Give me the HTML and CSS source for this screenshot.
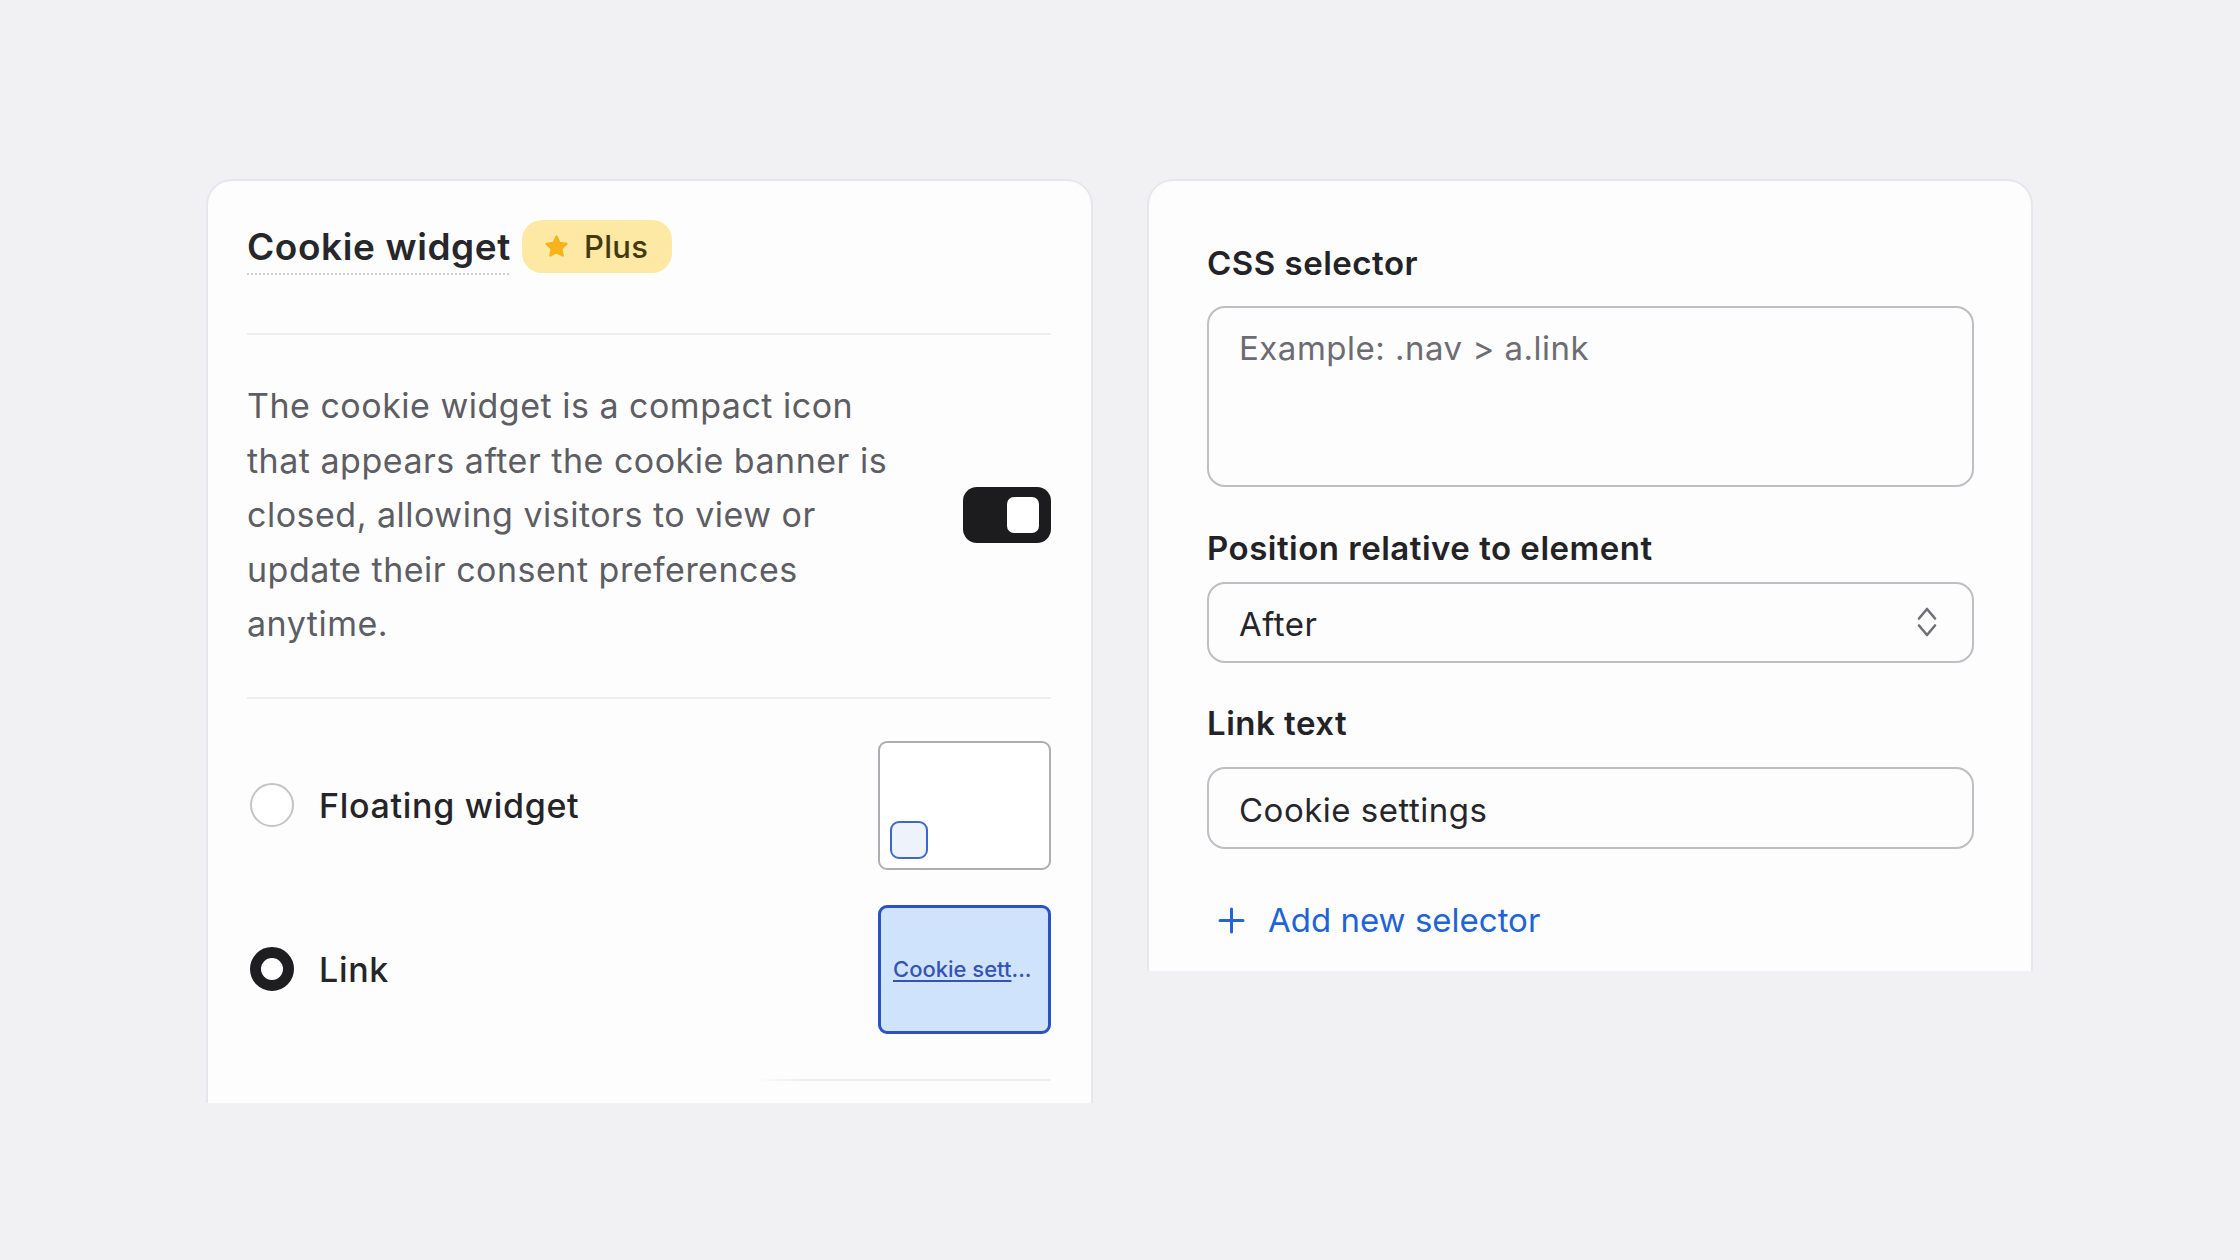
FILE: index.html
```html
<!DOCTYPE html>
<html lang="en">
<head>
<meta charset="utf-8">
<title>Cookie widget</title>
<link rel="stylesheet" href="styles.css">
</head>
<body>
<main class="stage">
  <section class="card card-widget">
    <header class="widget-head">
      <h2 class="widget-title"><span class="dotted">Cookie widget</span></h2>
      <span class="badge">
        <svg class="star" width="25" height="25" viewBox="0 0 24 24" aria-hidden="true"><polygon points="12 2.5 14.9 8.6 21.5 9.5 16.7 14.1 17.9 20.7 12 17.5 6.1 20.7 7.3 14.1 2.5 9.5 9.1 8.6" fill="#f7b31c" stroke="#f7b31c" stroke-width="2.2" stroke-linejoin="round"/></svg>
        <span>Plus</span>
      </span>
    </header>
    <div class="desc-row">
      <p class="desc">The cookie widget is a compact icon that appears after the cookie banner is closed, allowing visitors to view or update their consent preferences anytime.</p>
      <div class="toggle"><span class="knob"></span></div>
    </div>
    <div class="options">
      <div class="option">
        <span class="radio"></span>
        <span class="option-label">Floating widget</span>
        <div class="preview preview-float"><span class="mini"></span></div>
      </div>
      <div class="option">
        <span class="radio radio-on"></span>
        <span class="option-label">Link</span>
        <div class="preview preview-link"><span class="link-sample"><span class="u">Cookie sett</span>...</span></div>
      </div>
    </div>
    <div class="fade-rule"></div>
  </section>

  <section class="card card-form">
    <label class="field-label lbl-css">CSS selector</label>
    <div class="textarea"><span class="placeholder">Example: .nav &gt; a.link</span></div>
    <label class="field-label lbl-pos">Position relative to element</label>
    <div class="select">
      <span class="select-value">After</span>
      <svg class="chev" width="22" height="32" viewBox="0 0 22 32" aria-hidden="true"><path d="M3 12.5 L11 3 L19 12.5 M3 19.5 L11 29 L19 19.5" fill="none" stroke="#6f6f75" stroke-width="2.6" stroke-linecap="round" stroke-linejoin="round"/></svg>
    </div>
    <label class="field-label lbl-link">Link text</label>
    <div class="input"><span class="input-value">Cookie settings</span></div>
    <div class="add-row">
      <svg class="plus" width="27" height="27" viewBox="0 0 27 27" aria-hidden="true"><path d="M13.5 2 V25 M2 13.5 H25" stroke="#2466d8" stroke-width="3" stroke-linecap="round"/></svg>
      <span class="add-text">Add new selector</span>
    </div>
  </section>
</main>
</body>
</html>
```

FILE: styles.css
```css
* { box-sizing: border-box; }
html, body { margin: 0; padding: 0; }
body {
  background: #f1f0f3;
  font-family: Inter, "Noto Sans", "Liberation Sans", sans-serif;
  color: #1f1f23;
  width: 2240px;
  height: 1260px;
  overflow: hidden;
}
.stage {
  display: flex;
  align-items: flex-start;
  gap: 54px;
  padding: 179px 0 0 206px;
}
.card {
  background: #fdfdfe;
  border: 2px solid #e7e6eb;
  border-bottom: none;
  border-radius: 26px 26px 0 0;
}
.card-widget {
  width: 887px;
  height: 924px;
  padding: 39px 40px 0 39px;
  overflow: hidden;
}
.widget-head {
  display: flex;
  align-items: center;
  gap: 11px;
  height: 53px;
  margin-bottom: 60px;
}
.widget-title {
  margin: 0;
  font-size: 37px;
  font-weight: 600;
  letter-spacing: 0.6px;
  color: #27272b;
  line-height: 44px;
}
.dotted {
  text-decoration: underline dotted #cfcfd4;
  text-decoration-thickness: 2px;
  text-underline-offset: 14px;
  text-decoration-skip-ink: none;
}
.badge {
  display: inline-flex;
  align-items: center;
  gap: 15px;
  height: 53px;
  padding: 0 24px 0 22px;
  border-radius: 20px;
  background: #fde9a3;
  color: #45380f;
  font-size: 31px;
  font-weight: 500;
  letter-spacing: 0.3px;
}
.star { display: block; }
.desc-row {
  display: flex;
  align-items: center;
  justify-content: space-between;
  border-top: 2px solid #eeeef1;
  padding: 44px 0 45px;
}
.desc {
  margin: 0;
  width: 655px;
  font-size: 34px;
  letter-spacing: 0.5px;
  line-height: 54.6px;
  color: #5d5d64;
}
.toggle {
  width: 88px;
  height: 56px;
  border-radius: 14px;
  background: #1c1c1f;
  display: flex;
  justify-content: flex-end;
  align-items: center;
  padding: 0 12px;
}
.knob {
  width: 32px;
  height: 36px;
  border-radius: 7px;
  background: #ffffff;
}
.options {
  border-top: 2px solid #eeeef1;
  padding: 42px 0 45px;
  display: flex;
  flex-direction: column;
  gap: 35px;
}
.option {
  display: flex;
  align-items: center;
}
.radio {
  width: 44px;
  height: 44px;
  border-radius: 50%;
  border: 2px solid #c4c4c8;
  background: #fff;
  margin-left: 3px;
  flex: none;
}
.radio-on {
  border: 11px solid #1e1e21;
}
.option-label {
  margin-left: 25px;
  font-size: 34px;
  font-weight: 500;
  letter-spacing: 0.7px;
  color: #252529;
}
.preview {
  margin-left: auto;
  width: 173px;
  height: 129px;
  border-radius: 9px;
  flex: none;
}
.preview-float {
  border: 2px solid #adadb2;
  background: #fff;
  display: flex;
  align-items: flex-end;
  padding: 0 0 9px 10px;
}
.mini {
  width: 38px;
  height: 38px;
  border-radius: 9px;
  border: 2px solid #3d68c9;
  background: #eef2fb;
}
.preview-link {
  border: 3px solid #2a52c6;
  background: #cfe3fc;
  display: flex;
  align-items: center;
  padding-left: 12px;
}
.link-sample {
  font-size: 22px;
  font-weight: 500;
  color: #3653b4;
  white-space: nowrap;
}
.u {
  text-decoration: underline;
  text-underline-offset: 3px;
  text-decoration-thickness: 2px;
}
.fade-rule {
  height: 2px;
  margin-left: 510px;
  background: linear-gradient(90deg, rgba(238,238,241,0) 0, #eeeef1 40px, #eeeef1 100%);
}

.card-form {
  width: 886px;
  height: 792px;
  padding: 62px 57px 0 58px;
  display: flex;
  flex-direction: column;
}
.field-label {
  display: block;
  font-size: 33px;
  font-weight: 600;
  letter-spacing: 0.5px;
  line-height: 40px;
  color: #232327;
}
.lbl-css { margin-bottom: 23px; }
.lbl-pos { margin-bottom: 14px; }
.lbl-link { margin-bottom: 24px; }
.textarea {
  height: 181px;
  border: 2px solid #bebec3;
  border-radius: 18px;
  padding: 20px 30px;
  margin-bottom: 41px;
  background: #fdfdfe;
}
.placeholder {
  font-size: 33px;
  letter-spacing: 0.5px;
  line-height: 40px;
  color: #6c6c72;
}
.select {
  height: 81px;
  border: 2px solid #bebec3;
  border-radius: 18px;
  padding: 3px 34px 0 30px;
  margin-bottom: 40px;
  display: flex;
  align-items: center;
  justify-content: space-between;
}
.select-value, .input-value {
  font-size: 33px;
  letter-spacing: 0.5px;
  color: #26262a;
}
.chev { display: block; margin-top: -5px; }
.input {
  height: 82px;
  border: 2px solid #bebec3;
  border-radius: 18px;
  padding: 3px 30px 0;
  margin-bottom: 51px;
  display: flex;
  align-items: center;
}
.add-row {
  display: flex;
  align-items: center;
  gap: 23px;
  height: 40px;
  padding-left: 11px;
}
.plus { display: block; }
.add-text {
  font-size: 33px;
  color: #1f63d6;
}
```
